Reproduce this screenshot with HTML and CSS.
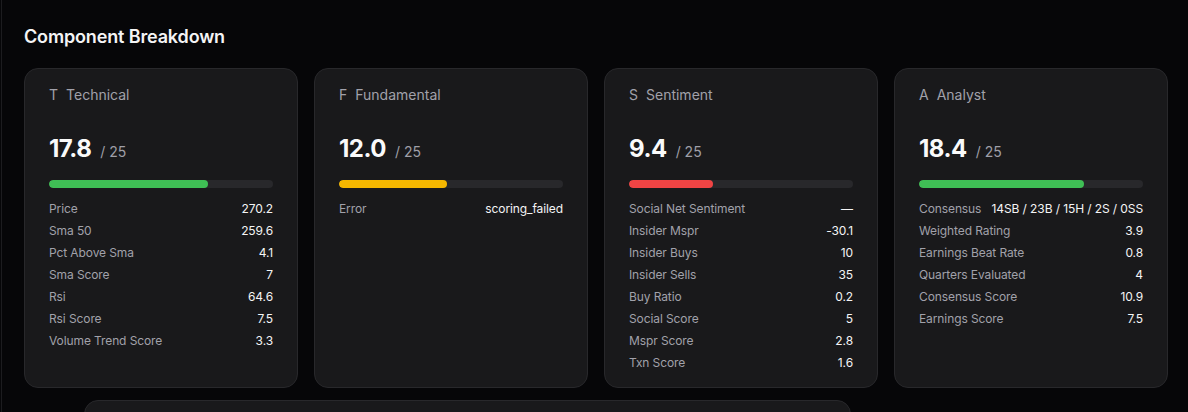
FILE: index.html
```html
<!DOCTYPE html>
<html lang="en">
<head>
<meta charset="utf-8">
<title>Component Breakdown</title>
<link rel="stylesheet" href="styles.css">
</head>
<body>
<div class="page">
  <h2 class="section-title">Component Breakdown</h2>
  <div class="grid">
    <div class="card">
      <div class="card-head"><span class="letter">T</span><span>Technical</span></div>
      <div class="score"><span class="value">17.8</span><span class="max">/ 25</span></div>
      <div class="bar"><div class="fill green" style="width:71.2%"></div></div>
      <ul class="rows">
        <li><span class="k">Price</span><span class="v">270.2</span></li>
        <li><span class="k">Sma 50</span><span class="v">259.6</span></li>
        <li><span class="k">Pct Above Sma</span><span class="v">4.1</span></li>
        <li><span class="k">Sma Score</span><span class="v">7</span></li>
        <li><span class="k">Rsi</span><span class="v">64.6</span></li>
        <li><span class="k">Rsi Score</span><span class="v">7.5</span></li>
        <li><span class="k">Volume Trend Score</span><span class="v">3.3</span></li>
      </ul>
    </div>
    <div class="card">
      <div class="card-head"><span class="letter">F</span><span>Fundamental</span></div>
      <div class="score"><span class="value">12.0</span><span class="max">/ 25</span></div>
      <div class="bar"><div class="fill amber" style="width:48%"></div></div>
      <ul class="rows">
        <li><span class="k">Error</span><span class="v">scoring_failed</span></li>
      </ul>
    </div>
    <div class="card">
      <div class="card-head"><span class="letter">S</span><span>Sentiment</span></div>
      <div class="score"><span class="value">9.4</span><span class="max">/ 25</span></div>
      <div class="bar"><div class="fill red" style="width:37.6%"></div></div>
      <ul class="rows">
        <li><span class="k">Social Net Sentiment</span><span class="v">—</span></li>
        <li><span class="k">Insider Mspr</span><span class="v">-30.1</span></li>
        <li><span class="k">Insider Buys</span><span class="v">10</span></li>
        <li><span class="k">Insider Sells</span><span class="v">35</span></li>
        <li><span class="k">Buy Ratio</span><span class="v">0.2</span></li>
        <li><span class="k">Social Score</span><span class="v">5</span></li>
        <li><span class="k">Mspr Score</span><span class="v">2.8</span></li>
        <li><span class="k">Txn Score</span><span class="v">1.6</span></li>
      </ul>
    </div>
    <div class="card">
      <div class="card-head"><span class="letter">A</span><span>Analyst</span></div>
      <div class="score"><span class="value">18.4</span><span class="max">/ 25</span></div>
      <div class="bar"><div class="fill green" style="width:73.6%"></div></div>
      <ul class="rows">
        <li><span class="k">Consensus</span><span class="v">14SB / 23B / 15H / 2S / 0SS</span></li>
        <li><span class="k">Weighted Rating</span><span class="v">3.9</span></li>
        <li><span class="k">Earnings Beat Rate</span><span class="v">0.8</span></li>
        <li><span class="k">Quarters Evaluated</span><span class="v">4</span></li>
        <li><span class="k">Consensus Score</span><span class="v">10.9</span></li>
        <li><span class="k">Earnings Score</span><span class="v">7.5</span></li>
      </ul>
    </div>
  </div>
  <div class="next-panel"></div>
</div>
</body>
</html>
```

FILE: styles.css
```css
* { box-sizing: border-box; }
html, body {
  margin: 0;
  padding: 0;
  background: #060608;
  height: 100%;
  overflow: hidden;
}
body {
  font-family: Inter, "Noto Sans", "Liberation Sans", sans-serif;
  color: #f4f4f5;
}
.page {
  margin-left: 1px;
  border-left: 1px solid #1c1c1f;
  padding: 25px 20px 0 22px;
  min-height: 100%;
}
.section-title {
  margin: 0 0 19px 0;
  font-size: 18px;
  line-height: 24px;
  font-weight: 600;
  color: #f4f4f5;
  letter-spacing: -0.15px;
}
.grid {
  display: grid;
  grid-template-columns: repeat(4, 1fr);
  gap: 16px;
}
.card {
  background: #19191b;
  border: 1px solid #28282b;
  border-radius: 14px;
  padding: 16px 24px 13px 24px;
}
.card-head {
  display: flex;
  gap: 8px;
  font-size: 14px;
  line-height: 20px;
  color: #a1a1aa;
}
.score {
  margin-top: 28px;
  display: flex;
  align-items: baseline;
  gap: 9px;
  line-height: 32px;
}
.score .value {
  font-size: 24px;
  font-weight: 700;
  color: #fafafa;
  letter-spacing: -0.5px;
}
.score .max {
  font-size: 14px;
  color: #9f9fa7;
}
.bar {
  margin-top: 12px;
  height: 8px;
  border-radius: 4px;
  background: #28282b;
  overflow: hidden;
}
.fill {
  height: 100%;
  border-radius: 4px;
}
.fill.green { background: #3fbf55; }
.fill.amber { background: #f5b700; }
.fill.red { background: #ef4444; }
.rows {
  list-style: none;
  margin: 10px 0 0 0;
  padding: 0;
}
.rows li {
  display: flex;
  justify-content: space-between;
  align-items: center;
  gap: 6px;
  font-size: 12px;
  line-height: 22px;
  white-space: nowrap;
  letter-spacing: -0.1px;
}
.rows .k { color: #a1a1aa; }
.rows .v { color: #f4f4f5; font-weight: 400; }
.next-panel {
  margin: 12px 0 0 60px;
  width: 767px;
  height: 40px;
  background: #19191b;
  border: 1px solid #28282b;
  border-radius: 14px;
}
```
